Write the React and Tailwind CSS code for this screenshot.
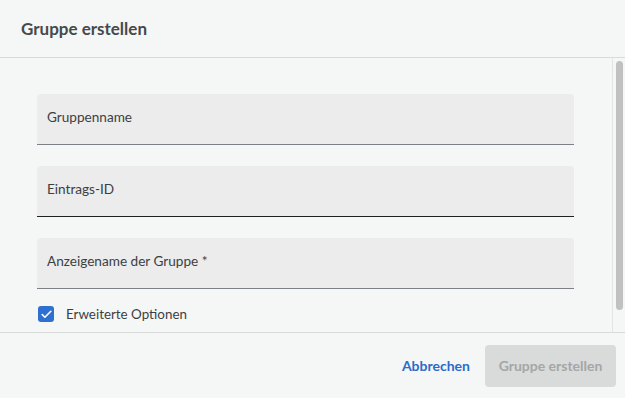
import { Check } from "lucide-react";

function Field({ label, focused }) {
  return (
    <div
      className={`flex h-[51px] items-center rounded-t-[4px] bg-[#ebeceb] px-[10px] pb-[3px] border-b ${focused ? "border-[#1f2224]" : "border-[#7c8185]"}`}
    >
      <span className="text-[13.6px] text-[#3d4043]">{label}</span>
    </div>
  );
}

export default function App() {
  return (
    <div className="flex h-[398px] w-[625px] flex-col bg-[#f5f7f6] font-['Lato',sans-serif]">
      <div className="flex h-[58px] shrink-0 items-center border-b border-[#d9dbdb] px-[21px]">
        <h2 className="text-[17px] font-bold text-[#46494c]">Gruppe erstellen</h2>
      </div>
      <div className="flex min-h-0 flex-1">
        <div className="flex flex-1 flex-col gap-[21px] pl-[37px] pr-[38px] pt-[36px]">
          <Field label="Gruppenname" />
          <Field label="Eintrags-ID" focused />
          <div className="flex flex-col gap-[15px]">
            <Field label="Anzeigename der Gruppe *" />
            <label className="flex items-center gap-[12px] pl-[1px]">
              <span className="grid h-[16px] w-[16px] place-items-center rounded-[3px] bg-[#2f6fcf] text-white">
                <Check size={13} strokeWidth={3} />
              </span>
              <span className="text-[13.4px] text-[#3d4043]">Erweiterte Optionen</span>
            </label>
          </div>
        </div>
        <div className="w-[13px] shrink-0 border-l border-[#e3e5e5] pl-[3px] pt-[3px]">
          <div className="h-[249px] w-[7px] rounded-full bg-[#c1c1c1]" />
        </div>
      </div>
      <div className="flex h-[66px] shrink-0 items-center justify-end gap-[15px] border-t border-[#d9dbdb] pr-[9px]">
        <button type="button" className="text-[14px] font-bold text-[#2b6bc9]">
          Abbrechen
        </button>
        <button
          type="button"
          className="h-[42px] w-[131px] rounded-[4px] bg-[#d9dada] text-[14px] font-bold text-[#a4a6a7]"
        >
          Gruppe erstellen
        </button>
      </div>
    </div>
  );
}
